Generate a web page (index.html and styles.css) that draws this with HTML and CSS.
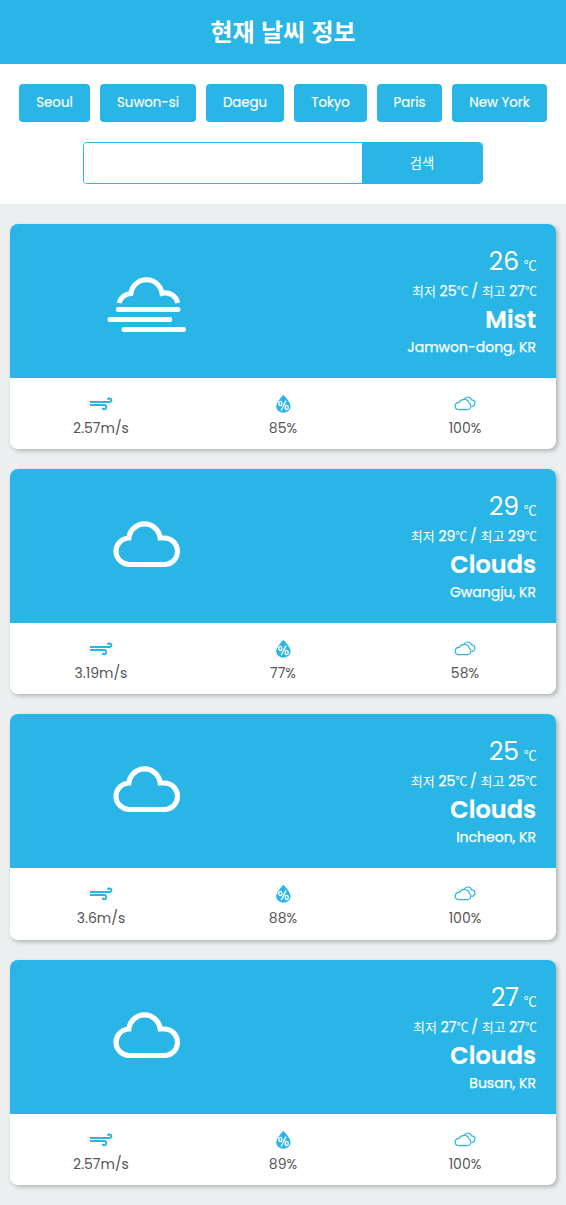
FILE: index.html
```html
<!DOCTYPE html>
<html lang="ko">
<head>
<meta charset="utf-8">
<title>현재 날씨 정보</title>
<link rel="stylesheet" href="styles.css">
</head>
<body>
<svg class="defs" width="0" height="0" aria-hidden="true">
  <symbol id="cloud" viewBox="0 0 80 64"><path d="M22.750 50.500H57.250A13.250 13.250 0 0 0 57.250 24H53.200A15.800 15.800 0 0 0 21.800 24A13.250 13.250 0 0 0 22.750 50.500Z" fill="none" stroke="currentColor" stroke-width="5.200"/></symbol>
  <symbol id="mist" viewBox="0 0 80 64"><path d="M12.200 34A12.500 12.500 0 0 1 23.900 24.400A15.700 15.700 0 0 1 55 24.400A12.500 12.500 0 0 1 70.700 34" fill="none" stroke="currentColor" stroke-width="5"/><path d="M11.300 40.400H71M3 50.400H62.700M17 60.500H76.500" fill="none" stroke="currentColor" stroke-width="5" stroke-linecap="round"/></symbol>
  <symbol id="wind" viewBox="0 0 24 20"><path d="M1 7.900H20.600Q22.400 7.700 22.400 6.100A1.900 1.900 0 0 0 18.700 5.700M1 11.100H15.400Q17.100 11.300 17.100 13.100A1.900 1.900 0 0 1 13.400 13.900" fill="none" stroke="currentColor" stroke-width="2"/></symbol>
  <symbol id="drop" viewBox="0 0 20 20"><path d="M10.400 .7Q17.600 8.300 17.600 12.200A7.200 6.600 0 0 1 3.200 12.200Q3.200 8.300 10.400 .7Z" fill="currentColor"/><path d="M13 6.600 8.200 16.200" stroke="#fff" stroke-width="1.400"/><ellipse cx="7.300" cy="9.400" rx="1.500" ry="2.100" fill="none" stroke="#fff" stroke-width="1.300"/><ellipse cx="13.700" cy="13.500" rx="1.500" ry="2.100" fill="none" stroke="#fff" stroke-width="1.300"/></symbol>
  <symbol id="cloudy" viewBox="0 0 24 20"><path d="M5.200 15.700H14.800A3.500 3.500 0 0 0 16.300 9.300 5.300 5.300 0 0 0 6.400 8.400 3.700 3.700 0 0 0 5.200 15.700ZM11.100 5.400A4 4 0 0 1 18.600 5.900 3.200 3.200 0 0 1 18.600 12.500" fill="none" stroke="currentColor" stroke-width="1.200"/></symbol>
</svg>
<header class="header"><h1>현재 날씨 정보</h1></header>
<section class="controls">
  <nav class="cities">
    <button class="city seoul">Seoul</button><button class="city suwon">Suwon-si</button><button class="city daegu">Daegu</button><button class="city tokyo">Tokyo</button><button class="city paris">Paris</button><button class="city newyork">New York</button>
  </nav>
  <form class="search"><input aria-label="도시"><button type="button">검색</button></form>
</section>
<main class="cards">
  <article class="card">
    <div class="summary"><div class="picture"><svg><use href="#mist"/></svg></div>
      <div class="info"><p class="temp">26 <small>℃</small></p><p class="range"><i>최저</i> 25<small>℃</small> / <i>최고</i> 27<small>℃</small></p><h2>Mist</h2><p class="place">Jamwon-dong, KR</p></div></div>
    <ul class="details"><li><svg class="wind"><use href="#wind"/></svg><span>2.57m/s</span></li><li><svg class="drop"><use href="#drop"/></svg><span>85%</span></li><li><svg class="wind"><use href="#cloudy"/></svg><span>100%</span></li></ul>
  </article>
  <article class="card">
    <div class="summary"><div class="picture"><svg><use href="#cloud"/></svg></div>
      <div class="info"><p class="temp">29 <small>℃</small></p><p class="range"><i>최저</i> 29<small>℃</small> / <i>최고</i> 29<small>℃</small></p><h2>Clouds</h2><p class="place">Gwangju, KR</p></div></div>
    <ul class="details"><li><svg class="wind"><use href="#wind"/></svg><span>3.19m/s</span></li><li><svg class="drop"><use href="#drop"/></svg><span>77%</span></li><li><svg class="wind"><use href="#cloudy"/></svg><span>58%</span></li></ul>
  </article>
  <article class="card">
    <div class="summary"><div class="picture"><svg><use href="#cloud"/></svg></div>
      <div class="info"><p class="temp">25 <small>℃</small></p><p class="range"><i>최저</i> 25<small>℃</small> / <i>최고</i> 25<small>℃</small></p><h2>Clouds</h2><p class="place">Incheon, KR</p></div></div>
    <ul class="details"><li><svg class="wind"><use href="#wind"/></svg><span>3.6m/s</span></li><li><svg class="drop"><use href="#drop"/></svg><span>88%</span></li><li><svg class="wind"><use href="#cloudy"/></svg><span>100%</span></li></ul>
  </article>
  <article class="card">
    <div class="summary"><div class="picture"><svg><use href="#cloud"/></svg></div>
      <div class="info"><p class="temp">27 <small>℃</small></p><p class="range"><i>최저</i> 27<small>℃</small> / <i>최고</i> 27<small>℃</small></p><h2>Clouds</h2><p class="place">Busan, KR</p></div></div>
    <ul class="details"><li><svg class="wind"><use href="#wind"/></svg><span>2.57m/s</span></li><li><svg class="drop"><use href="#drop"/></svg><span>89%</span></li><li><svg class="wind"><use href="#cloudy"/></svg><span>100%</span></li></ul>
  </article>
</main>
</body>
</html>
```
FILE: styles.css
```css
* { box-sizing: border-box; margin: 0; padding: 0; }
body { background: #ebefef; color: #555; font: 14px Poppins, Inter, "Noto Sans CJK KR", sans-serif; }
button, input { font: inherit; }
.defs { display: block; height: 0; }
.header { height: 64px; padding-bottom: 2px; display: flex; align-items: center; justify-content: center; background: #29b6e6; color: #fff; }
.header h1 { font: 700 24px/36px "Noto Sans CJK KR", sans-serif; letter-spacing: -.1px; }
.controls { background: #fff; height: 140px; padding: 20px 0; display: flex; flex-direction: column; align-items: center; gap: 20px; }
.cities { display: flex; gap: 10px; }
.city { height: 38px; border: 0; border-radius: 4px; background: #29b6e6; color: #fff; font-size: 13.33px; white-space: nowrap; -webkit-text-stroke: .15px #fff; }
.seoul { width: 71px; } .suwon { width: 96px; } .daegu { width: 78px; } .tokyo { width: 73px; } .paris { width: 65px; } .newyork { width: 95px; }
.search { width: 400px; height: 42px; display: flex; border: 1px solid #29b6e6; border-radius: 4px; overflow: hidden; }
.search input { flex: 1; min-width: 0; border: 0; background: #fff; }
.search button { width: 120px; padding-bottom: 2px; border: 0; background: #29b6e6; color: #fff; font: 13.3px "Noto Sans CJK KR", sans-serif; }
.cards { padding: 20px 10px; display: grid; gap: 20px; }
.card { height: 225.2px; border-radius: 8px; overflow: hidden; background: #fff; box-shadow: 2px 2px 4px rgba(0,0,0,.25); }
.summary { height: 154px; display: grid; grid-template-columns: 1fr 1fr; background: #29b6e6; color: #fff; }
.picture { display: flex; align-items: center; justify-content: center; }
.picture svg { width: 80px; height: 64px; }
.info { padding: 20px 20px 0 0; text-align: right; white-space: nowrap; }
.temp { height: 36px; font-size: 25px; line-height: 36px; }
.info small { font-family: "Noto Sans CJK KR", sans-serif; font-weight: 400; font-size: 12px; line-height: 1; letter-spacing: -1px; -webkit-text-stroke: 0; }
.temp small { font-size: 13px; letter-spacing: -.7px; margin-left: -2px; }
.range { height: 22px; font-size: 14px; line-height: 22px; -webkit-text-stroke: .25px #fff; }
.range i { font: 400 13px/1 "Noto Sans CJK KR", sans-serif; -webkit-text-stroke: 0; }
.info h2 { height: 36px; font-size: 24px; line-height: 36px; font-weight: 600; -webkit-text-stroke: .2px #fff; }
.place { line-height: 19px; -webkit-text-stroke: .25px #fff; }
.details { list-style: none; height: 71.2px; padding-top: 16px; display: grid; grid-template-columns: repeat(3, 1fr); }
.details li { display: flex; flex-direction: column; align-items: center; }
.details svg { height: 20px; color: #29b6e6; }
.wind { width: 24px; }
.drop { width: 20px; }
.details span { line-height: 28px; font-size: 14px; font-weight: 400; }
```
